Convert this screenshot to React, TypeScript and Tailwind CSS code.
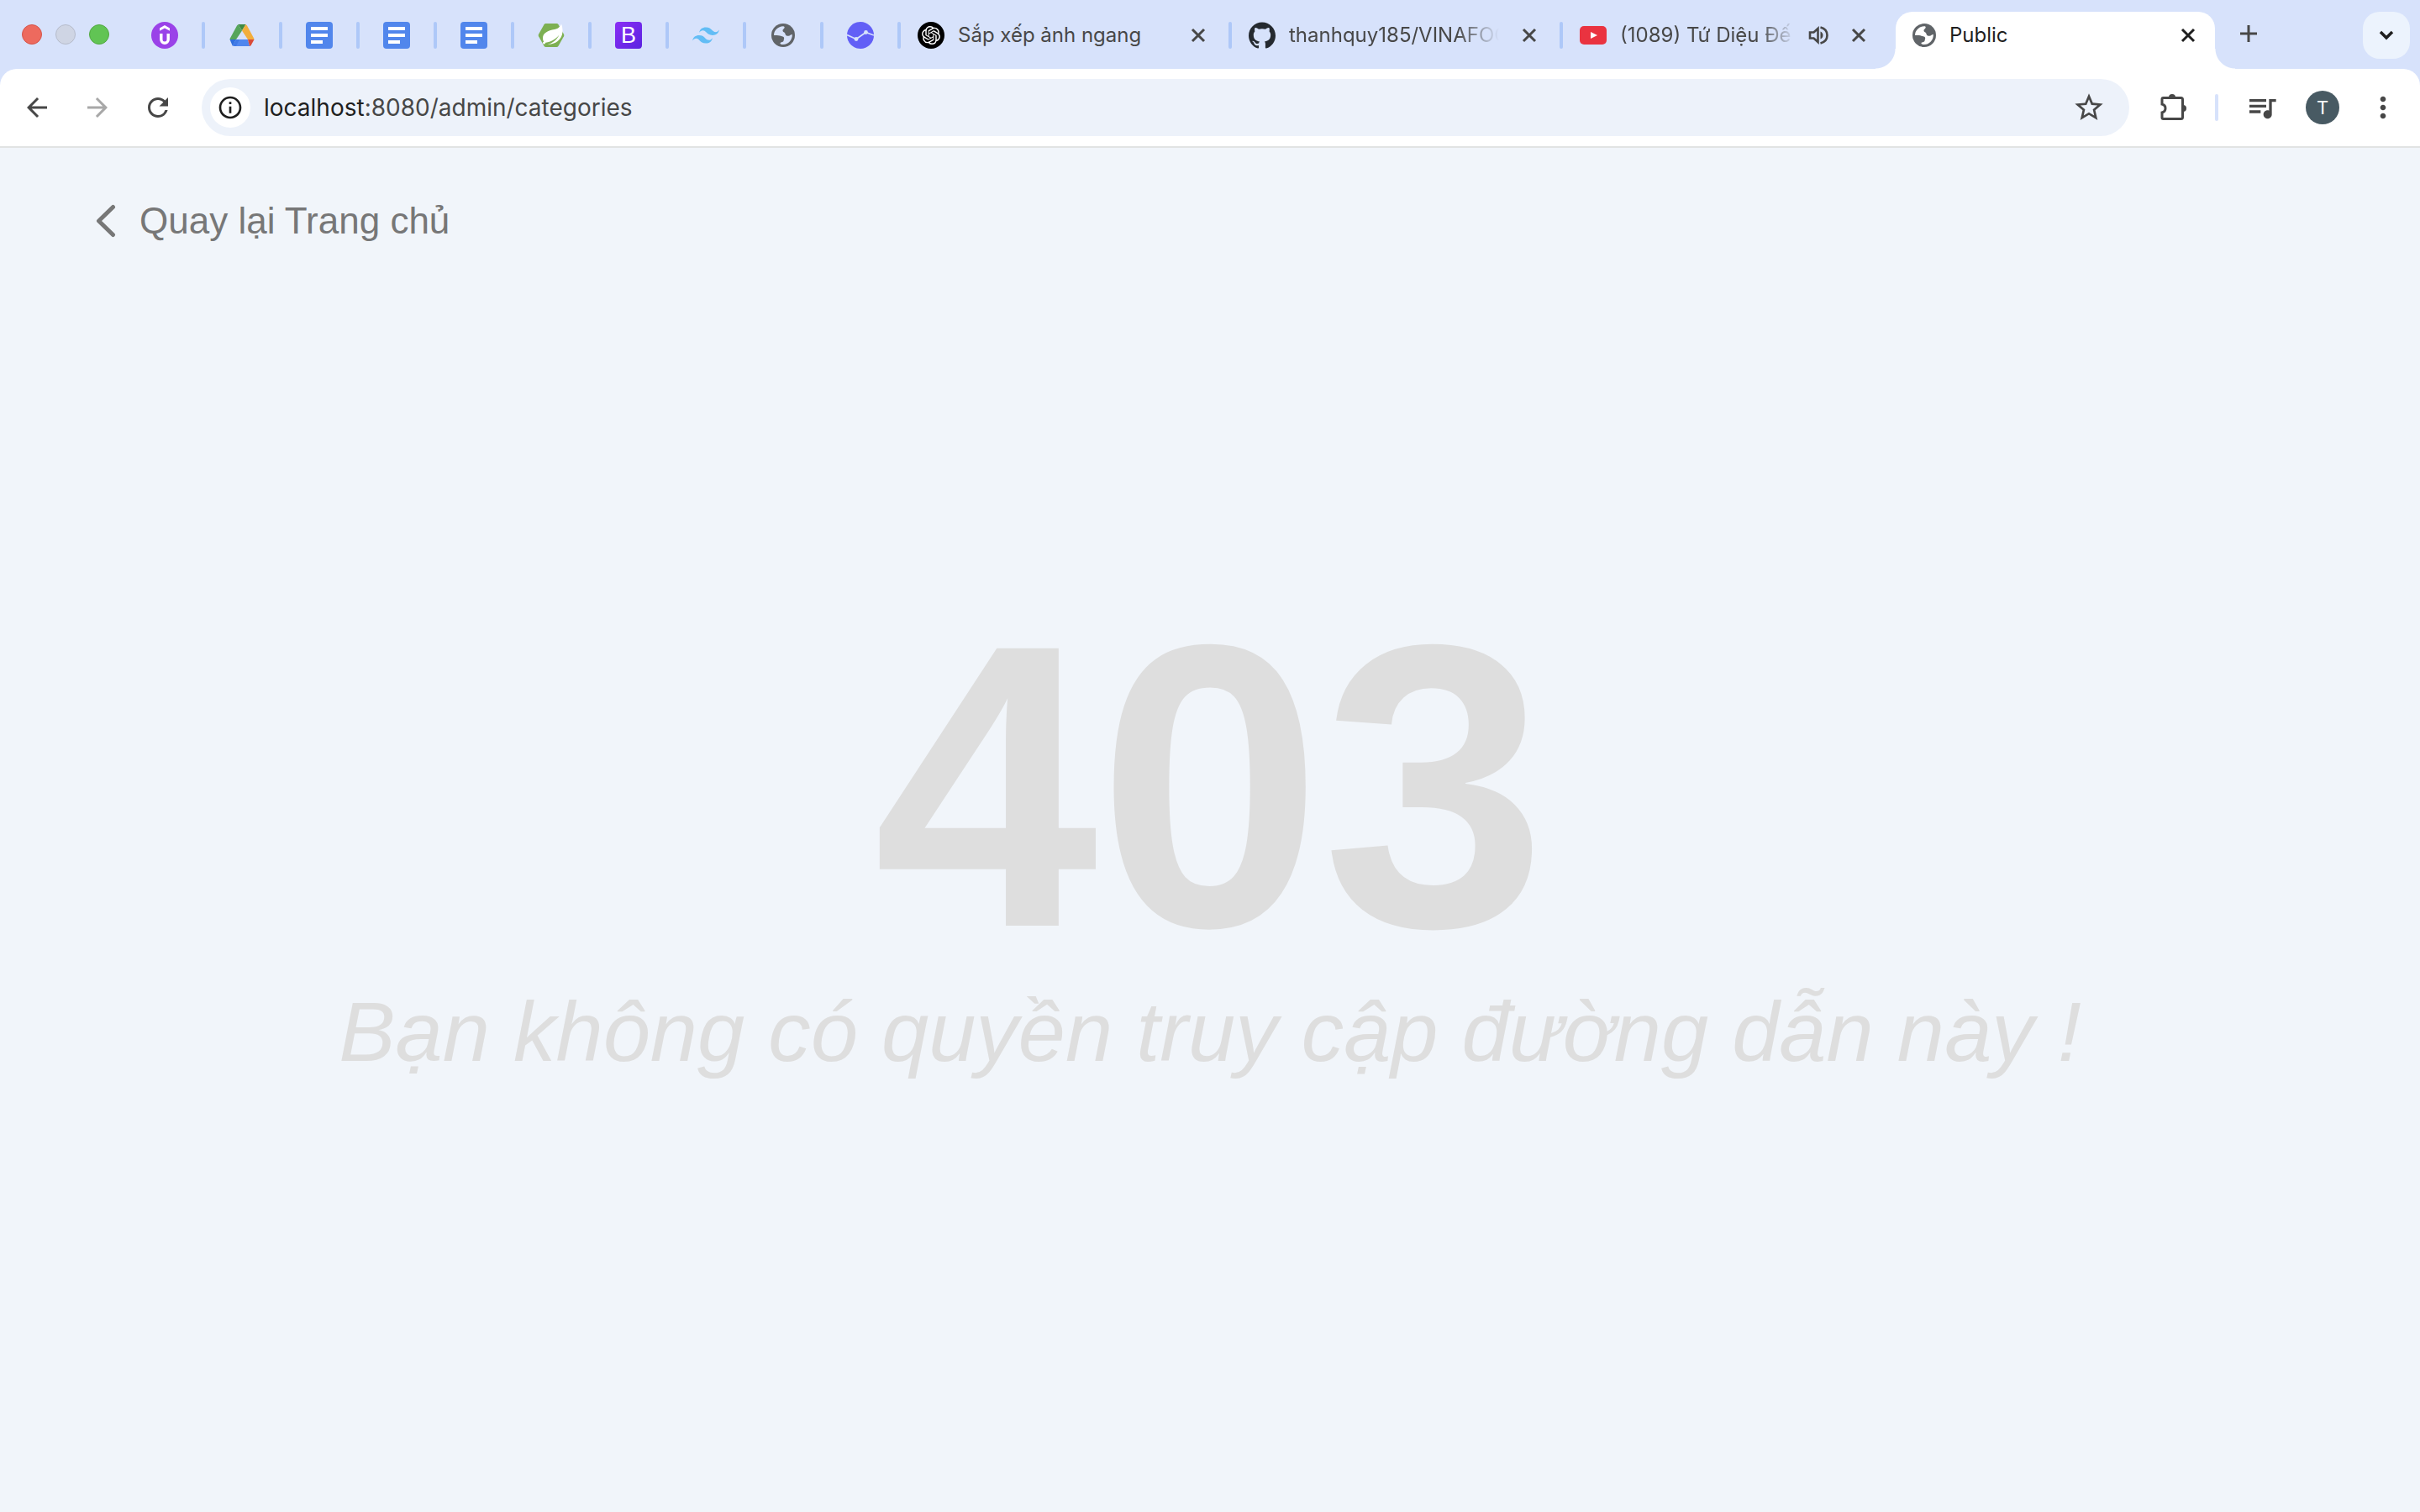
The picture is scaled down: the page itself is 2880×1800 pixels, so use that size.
import type { ReactNode } from "react";
import {
  MdArrowBack,
  MdArrowForward,
  MdInfoOutline,
  MdMoreVert,
  MdOutlineStarBorder,
  MdQueueMusic,
  MdRefresh,
} from "react-icons/md";
import { SiGithub, SiOpenai, SiTailwindcss } from "react-icons/si";

function UdemyIcon() {
  return (
    <svg viewBox="0 0 32 32" className="size-8">
      <circle cx="16" cy="16" r="16" fill="#9a42e8" />
      <path d="M16 4 22 7.500v3.200L16 7.400l-6 3.300V7.500z" fill="#fff" />
      <path d="M11.800 14v7a4.200 4.200 0 0 0 8.400 0v-7" fill="none" stroke="#fff" strokeWidth="3.400" />
    </svg>
  );
}

function DriveIcon() {
  return (
    <svg viewBox="0 0 32 32" className="size-8">
      <path d="M11.500 3h9l-4.500 7.500z" fill="#3f8a42" />
      <path d="M11.500 3 16 10.500 9 21H1.500a3 3 0 0 1 .4-1.500L10 4.500z" fill="#56a55b" />
      <path d="M20.500 3 16 10.500 23 21h7.500a3 3 0 0 0-.4-1.500L22 4.500z" fill="#f2ae3d" />
      <path d="M9 21h14l2 8H7z" fill="#4f86ee" />
      <path d="M1.500 21H9l-4.300 7.500z" fill="#2f6fdd" />
      <path d="m9 21-4.500 7.200c.8.6 1.500.8 2.500.8h2L13 21z" fill="#3f79e6" />
      <path d="M23 21h7.500l-3.800 7q-.8 1-1.700 1z" fill="#d94a38" />
    </svg>
  );
}

function DocsIcon() {
  return (
    <svg viewBox="0 0 32 32" className="size-8">
      <rect width="32" height="32" rx="4" fill="#5186ec" />
      <path d="M6 6h20v4H6zM6 14h20v4H6zM6 22h14v4H6z" fill="#fff" />
    </svg>
  );
}

function SpringIcon() {
  return (
    <svg viewBox="0 0 32 32" className="size-8">
      <path d="M9.500 2h13q1.300 0 2 1.200l6.500 11.500q.7 1.300 0 2.600l-6.500 11.500q-.7 1.200-2 1.200h-13q-1.300 0-2-1.200L1 17.300q-.7-1.300 0-2.600L7.500 3.200Q8.200 2 9.500 2z" fill="#7db052" />
      <path d="M28 2.500c-1 2.500-3 5.500-8 6.500-8 1.500-14 4-14 10.500 0 2.500 1 4.500 2.500 5.500 6-1 12-3 17-9.500-3 6.500-8 10-14 11.300C19 27.500 29 22 29.500 12c.2-4-.5-7-1.500-9.500z" fill="#fff" />
      <circle cx="7.500" cy="25" r="1.500" fill="#fff" />
    </svg>
  );
}

function BootstrapIcon() {
  return (
    <span className="flex size-8 items-center justify-center rounded bg-linear-to-br from-[#8a2df5] to-[#5a22e0] font-['Liberation_Sans',sans-serif] text-[27px] leading-8 text-white">
      B
    </span>
  );
}

function GlobeIcon() {
  return (
    <svg viewBox="0 0 28 28" className="size-7">
      <circle cx="14" cy="14" r="14" fill="#606468" />
      <path d="M3 14C3 8 8 3.300 14 3.200c1.500 0 2 1 1.500 2-.5 1.200-2 1.500-2 3 0 2.500 2.500 1.500 3 4 .3 2 2 2.800 4 2.600 1.600-.2 2.600-1.800 4.300-1.800C25.200 19.500 20 25 14 25c-2.500 0-3.800-.7-3.500-1.800.3-1 2.300-.7 3.500-1.700 1-1 .5-2 1-3 .4-1 .2-2.500-1.500-3C11.500 15 9 14 6.500 14z" fill="currentColor" />
    </svg>
  );
}

function ChartIcon() {
  return (
    <svg viewBox="0 0 32 32" className="size-8">
      <circle cx="16" cy="16" r="16" fill="#625ff6" />
      <path d="M0 15.500 11 20.500 22.500 12.500 32 16" fill="none" stroke="#d7e2fb" strokeWidth="1.600" />
      <circle cx="11" cy="20.500" r="2.400" fill="#d7e2fb" />
      <circle cx="22.500" cy="12.500" r="2.400" fill="#d7e2fb" />
    </svg>
  );
}

function OpenAiIcon() {
  return (
    <span className="flex size-8 items-center justify-center rounded-full bg-black text-white">
      <SiOpenai className="size-[22px]" />
    </span>
  );
}

function YoutubeIcon() {
  return (
    <svg viewBox="0 0 32 32" className="size-8">
      <rect y="5" width="32" height="22" rx="5" fill="#ea3340" />
      <path d="m13 12 8 4-8 4z" fill="#fff" />
    </svg>
  );
}

function SpeakerIcon() {
  return (
    <svg viewBox="0 0 24 24" className="size-6" fill="none" stroke="#474747" strokeWidth="2.600">
      <path d="M2 8.500h4.500L11.500 4v16l-5-4.500H2z" />
      <path d="M14.500 7.500v9q3-1.500 3-4.500t-3-4.500z" fill="#474747" stroke="none" />
      <path d="M14.500 2.500q8 2 8 9.500t-8 9.500" />
    </svg>
  );
}

function CloseIcon() {
  return (
    <svg viewBox="0 0 24 24" className="size-6" fill="none" stroke="currentColor" strokeWidth="3">
      <path d="m5 5 14 14M19 5 5 19" />
    </svg>
  );
}

function PuzzleIcon() {
  return (
    <svg viewBox="0 0 34 34" className="size-[34px]" fill="none" stroke="#474747" strokeWidth="3">
      <path d="M4.500 5.500h21q2 0 2 2v21q0 2-2 2h-21q-1.500 0-1.500-1.500v-6q4-1 4-5t-4-5V7q0-1.500 1.500-1.500z" />
      <path d="M11 5a4 4 0 0 1 8 0zM28 14a4 4 0 0 1 0 8z" fill="#474747" stroke="none" />
    </svg>
  );
}

function TabDivider() {
  return <span className="h-8 w-1 shrink-0 rounded-sm bg-[#aec8f8]" />;
}

function PinnedTab({ label, children }: { label: string; children: ReactNode }) {
  return (
    <div className="flex shrink-0 items-center">
      <button type="button" aria-label={label} className="flex h-14 w-22 items-center justify-center">
        {children}
      </button>
      <TabDivider />
    </div>
  );
}

function Tab({
  icon,
  title,
  fade = false,
  sound = false,
  divider = true,
}: {
  icon: ReactNode;
  title: string;
  fade?: boolean;
  sound?: boolean;
  divider?: boolean;
}) {
  return (
    <div className="flex w-[394px] shrink-0 items-center pl-5">
      <button type="button" className="flex min-w-0 flex-1 items-center gap-4 text-left">
        <span className="shrink-0">{icon}</span>
        <span
          className={
            fade
              ? "flex-1 overflow-hidden whitespace-nowrap mask-r-from-80% mask-r-to-100%"
              : "flex-1 overflow-hidden whitespace-nowrap"
          }
        >
          {title}
        </span>
      </button>
      {sound && (
        <button type="button" aria-label="Mute tab" className="ml-4 shrink-0">
          <SpeakerIcon />
        </button>
      )}
      <button type="button" aria-label="Close tab" className="mr-6 ml-6 shrink-0">
        <CloseIcon />
      </button>
      {divider ? <TabDivider /> : <span className="w-1.5" />}
    </div>
  );
}

function TabStrip() {
  return (
    <header className="flex h-[82px] items-end bg-[#d7e2fb] text-2xl text-[#474747]">
      <div className="flex h-[82px] w-38 shrink-0 items-center gap-4 pl-[26px]">
        <button type="button" aria-label="Close window" className="size-6 rounded-full border border-[#d5544a] bg-[#ed6a5e]" />
        <button type="button" aria-label="Minimize window" className="size-6 rounded-full border border-[#b6bccb] bg-[#cfd5e4]" />
        <button type="button" aria-label="Zoom window" className="size-6 rounded-full border border-[#52a842] bg-[#61c454]" />
      </div>
      <nav className="flex h-[68px] min-w-0 items-start" aria-label="Tabs">
        <div className="flex h-14 items-center">
          <PinnedTab label="Udemy"><UdemyIcon /></PinnedTab>
          <PinnedTab label="Google Drive"><DriveIcon /></PinnedTab>
          <PinnedTab label="Google Docs"><DocsIcon /></PinnedTab>
          <PinnedTab label="Google Docs"><DocsIcon /></PinnedTab>
          <PinnedTab label="Google Docs"><DocsIcon /></PinnedTab>
          <PinnedTab label="Spring"><SpringIcon /></PinnedTab>
          <PinnedTab label="Bootstrap"><BootstrapIcon /></PinnedTab>
          <PinnedTab label="Tailwind CSS"><SiTailwindcss className="size-8 text-[#62bdf5]" /></PinnedTab>
          <PinnedTab label="Web page"><span className="text-[#d7e2fb]"><GlobeIcon /></span></PinnedTab>
          <PinnedTab label="Charts"><ChartIcon /></PinnedTab>
          <Tab icon={<OpenAiIcon />} title="Sắp xếp ảnh ngang" />
          <Tab icon={<SiGithub className="size-8 text-[#24292f]" />} title="thanhquy185/VINAFOOD" fade />
          <Tab icon={<YoutubeIcon />} title="(1089) Tứ Diệu Đế" fade sound divider={false} />
        </div>
        <div className="relative ml-0.5 flex h-[68px] w-[380px] shrink-0 items-start rounded-t-[20px] bg-white px-5 text-[#1f1f1f]">
          <span className="absolute bottom-0 -left-6 size-6 bg-radial-[circle_at_0_0] from-transparent from-[23px] to-white to-[24px]" />
          <span className="absolute -right-6 bottom-0 size-6 bg-radial-[circle_at_100%_0] from-transparent from-[23px] to-white to-[24px]" />
          <div className="flex h-14 flex-1 items-center">
            <button type="button" className="flex flex-1 items-center gap-4 text-left">
              <span className="text-white"><GlobeIcon /></span>
              Public
            </button>
            <button type="button" aria-label="Close tab"><CloseIcon /></button>
          </div>
        </div>
      </nav>
      <button type="button" aria-label="New tab" className="mb-[30px] ml-7 shrink-0">
        <svg viewBox="0 0 24 24" className="size-6" stroke="#474747" strokeWidth="3">
          <path d="M2 12h20M12 2v20" />
        </svg>
      </button>
      <button type="button" aria-label="Search tabs" className="mr-3 mb-3 ml-auto flex size-14 shrink-0 items-center justify-center rounded-[20px] bg-[#ecf3fd]">
        <svg viewBox="0 0 20 20" className="size-5" fill="none" stroke="#1f1f1f" strokeWidth="3.500">
          <path d="m3 6 7 7 7-7" />
        </svg>
      </button>
    </header>
  );
}

function Toolbar() {
  return (
    <div className="bg-[#d7e2fb]">
      <div className="flex h-[94px] items-center rounded-t-[20px] border-b-2 border-[#e1e3e3] bg-white pr-6 pl-[26px] text-[#474747]">
        <button type="button" aria-label="Back"><MdArrowBack className="size-9" /></button>
        <button type="button" aria-label="Forward" className="ml-9 text-[#a8a8a8]"><MdArrowForward className="size-9" /></button>
        <button type="button" aria-label="Reload" className="ml-9"><MdRefresh className="size-9" /></button>
        <div className="ml-[34px] flex h-[68px] min-w-0 flex-1 items-center rounded-full bg-[#edf2fa] pr-7 pl-2.5">
          <button type="button" aria-label="View site information" className="flex size-12 items-center justify-center rounded-full bg-white text-[#1f1f1f]">
            <MdInfoOutline className="size-8" />
          </button>
          <div className="ml-4 flex-1 text-[28px]" role="textbox" aria-label="Address">
            <span className="text-[#1f1f1f]">localhost</span>:8080/admin/categories
          </div>
          <button type="button" aria-label="Bookmark this page"><MdOutlineStarBorder className="size-10" /></button>
        </div>
        <button type="button" aria-label="Extensions" className="ml-9"><PuzzleIcon /></button>
        <span className="mx-8 h-8 w-1 rounded-sm bg-[#d7e2fb]" />
        <button type="button" aria-label="Media controls"><MdQueueMusic className="size-10" /></button>
        <button type="button" aria-label="Profile" className="ml-8 flex size-10 items-center justify-center rounded-full bg-[#485a63] text-[22px] text-white">
          T
        </button>
        <button type="button" aria-label="Menu" className="ml-8"><MdMoreVert className="size-10" /></button>
      </div>
    </div>
  );
}

export default function App() {
  return (
    <div className="flex min-h-screen flex-col bg-[#f1f5fa] font-[Inter,'Noto_Sans',sans-serif]">
      <TabStrip />
      <Toolbar />
      <main className="flex flex-1 flex-col font-['Liberation_Sans',Arial,sans-serif]">
        <a href="/" className="mt-[57px] ml-28 flex items-center gap-[26px] self-start text-[44px] leading-[60px] text-[#777777]">
          <svg viewBox="0 0 28 40" className="h-10 w-7" fill="none" stroke="currentColor" strokeWidth="5" strokeLinecap="round" strokeLinejoin="round">
            <path d="M22.500 3.500 5.500 20l17 16.500" />
          </svg>
          Quay lại Trang chủ
        </a>
        <div className="mt-[407px] text-center text-[#dedede]">
          <h1 className="text-[480px] leading-[472px] font-bold">403</h1>
          <p className="text-[101px] leading-[112px] italic">Bạn không có quyền truy cập đường dẫn này !</p>
        </div>
      </main>
    </div>
  );
}
